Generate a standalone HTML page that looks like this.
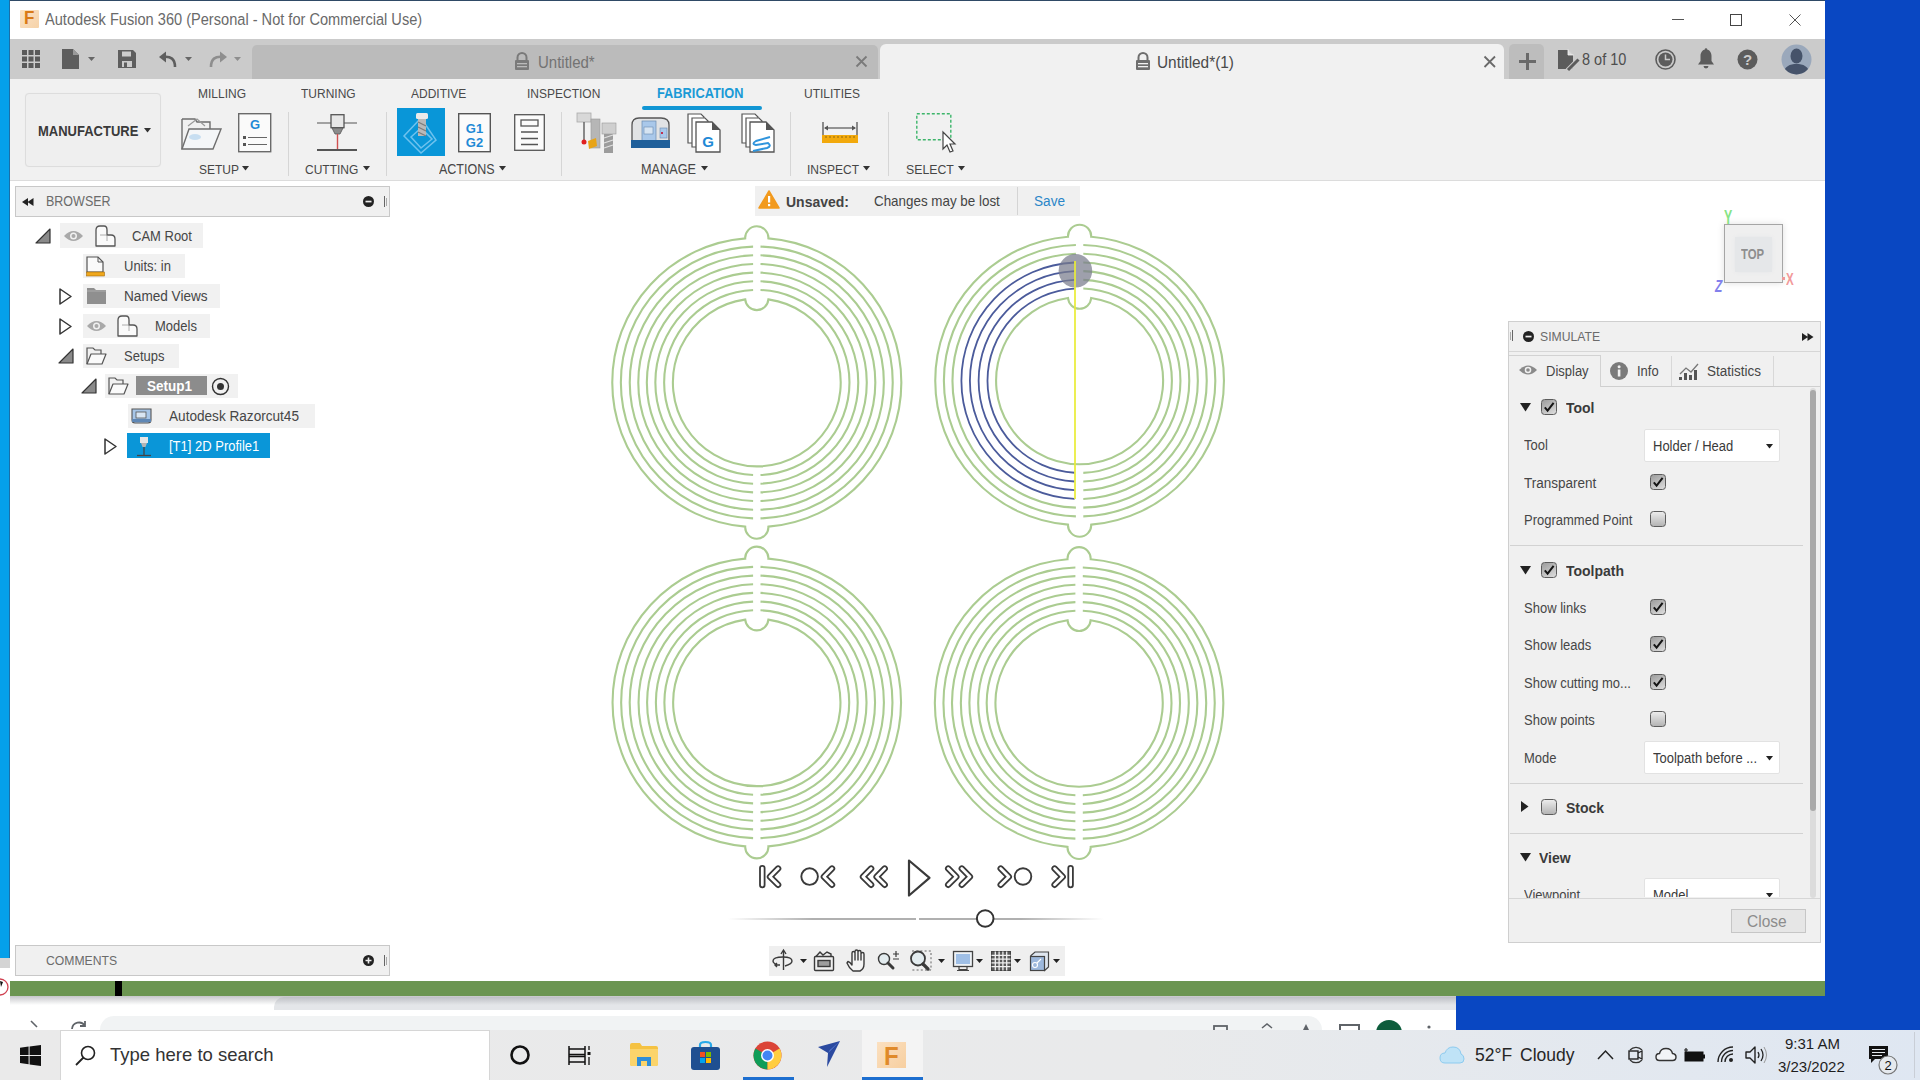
<!DOCTYPE html>
<html><head><meta charset="utf-8">
<style>
*{margin:0;padding:0;box-sizing:border-box}
html,body{width:1920px;height:1080px;overflow:hidden;background:#0947c2;font-family:"Liberation Sans",sans-serif;color:#3c3c3c}
.a{position:absolute}
.t{position:absolute;white-space:nowrap;line-height:1;transform:scaleY(1.1);transform-origin:0 0}
.tb{transform:none}
svg{position:absolute;overflow:visible}
</style></head><body>
<!-- desktop / background -->
<div class="a" style="left:0;top:0;width:10px;height:958px;background:#05a0ea"></div><div class="a" style="left:9px;top:0;width:1px;height:958px;background:#1a6fa8"></div>
<!-- behind browser window -->
<div class="a" style="left:0;top:958px;width:10px;height:10px;background:#d4d4d4"></div>
<div class="a" style="left:0;top:996px;width:1456px;height:34px;background:#fff"></div>
<div class="a" style="left:274px;top:997px;width:1182px;height:13px;background:#e4e6e9;border-radius:10px 0 0 0"></div>
<div class="a" style="left:10px;top:996px;width:1446px;height:9px;background:linear-gradient(rgba(150,152,158,0.55),rgba(200,202,206,0))"></div>
<div class="a" style="left:100px;top:1016px;width:1222px;height:14px;background:#f1f3f4;border-radius:14px 14px 0 0"></div>
<svg style="left:28px;top:1020px" width="60" height="10"><path d="M3 1L9 7" stroke="#5f6368" stroke-width="1.6"/><path d="M44 9A7 7 0 0 1 57 6M57 1V6H52" fill="none" stroke="#5f6368" stroke-width="1.8"/></svg>
<div class="a" style="left:0;top:968px;width:10px;height:28px;background:#fff"></div>
<svg style="left:0;top:978px" width="10" height="20"><circle cx="0" cy="9" r="8" fill="none" stroke="#d04050" stroke-width="1.3"/><path d="M0 3L3 4L1 9" fill="#111"/></svg>
<svg style="left:1205px;top:1018px" width="240" height="12"><rect x="9" y="8" width="13" height="6" fill="none" stroke="#5f6368" stroke-width="1.8"/><path d="M57 10L62 6L67 10" fill="none" stroke="#5f6368" stroke-width="1.6"/><path d="M98 12L101 6L104 12" fill="#5f6368"/><rect x="135" y="7" width="19" height="8" fill="none" stroke="#5f6368" stroke-width="2"/><circle cx="184" cy="15" r="13" fill="#0d5c3c"/><circle cx="224" cy="9" r="1.6" fill="#5f6368"/></svg>
<!-- main window -->
<div class="a" style="left:10px;top:0;width:1815px;height:996px;background:#fff;border-top:1px solid #2f4a66"></div>
<!-- title bar -->
<!-- tab bar -->
<div class="a" style="left:10px;top:39px;width:1815px;height:40px;background:#cbcbcb"></div>
<div class="a" style="left:252px;top:45px;width:626px;height:34px;background:#bbbbbb;border-radius:5px 5px 0 0"></div>
<div class="a" style="left:880px;top:44px;width:624px;height:35px;background:#f1f1f1;border-radius:6px 6px 0 0"></div>
<div class="a" style="left:1509px;top:44px;width:35px;height:35px;background:#bdbdbd;border-radius:5px 5px 0 0"></div>
<!-- toolbar -->
<div class="a" style="left:10px;top:79px;width:1815px;height:102px;background:#f1f1f1;border-bottom:1px solid #dcdcdc"></div>
<!-- green status bar -->
<div class="a" style="left:10px;top:981px;width:1815px;height:15px;background:#6b9551"></div>
<div class="a" style="left:115px;top:981px;width:7px;height:15px;background:#000"></div>
<!-- title contents -->
<div class="a" style="left:20px;top:10px;width:19px;height:18px;background:linear-gradient(135deg,#fbe3c6,#f6d2a8);border-radius:1px"></div>
<div class="t" style="left:24px;top:9px;font-size:17px;font-weight:700;color:#d97a17">F</div>
<div class="t" style="left:45px;top:12px;font-size:14.6px;color:#6a6a6a">Autodesk Fusion 360 (Personal - Not for Commercial Use)</div>
<div class="a" style="left:1672px;top:19px;width:12px;height:1px;background:#555"></div>
<div class="a" style="left:1730px;top:14px;width:12px;height:12px;border:1px solid #444"></div>
<svg style="left:1789px;top:14px" width="12" height="12"><path d="M0.5 0.5L11.5 11.5M11.5 0.5L0.5 11.5" stroke="#555" stroke-width="1"/></svg>
<!-- tab bar icons -->
<svg style="left:22px;top:50px" width="18" height="18"><g fill="#5a5a5a"><rect x="0" y="0" width="5" height="5"/><rect x="6.5" y="0" width="5" height="5"/><rect x="13" y="0" width="5" height="5"/><rect x="0" y="6.5" width="5" height="5"/><rect x="6.5" y="6.5" width="5" height="5"/><rect x="13" y="6.5" width="5" height="5"/><rect x="0" y="13" width="5" height="5"/><rect x="6.5" y="13" width="5" height="5"/><rect x="13" y="13" width="5" height="5"/></g></svg>
<svg style="left:62px;top:49px" width="36" height="20"><path d="M0 0H11L17 6V20H0Z" fill="#5e5e5e"/><path d="M11 0V6H17" fill="#9a9a9a"/><path d="M26 8H33L29.5 12Z" fill="#666"/></svg>
<svg style="left:118px;top:50px" width="18" height="18"><path d="M0 0H15L18 3V18H0Z" fill="#5e5e5e"/><rect x="4" y="1.5" width="9" height="5" fill="#cbcbcb"/><rect x="4" y="11" width="10" height="6" fill="#cbcbcb"/><rect x="6" y="12.5" width="3" height="4.5" fill="#5e5e5e"/></svg>
<svg style="left:159px;top:51px" width="36" height="18"><path d="M16 16C16 8 12 5 4 6" fill="none" stroke="#5e5e5e" stroke-width="2.6"/><path d="M0 6L7 0.5V11.5Z" fill="#5e5e5e"/><path d="M26 6H33L29.5 10Z" fill="#666"/></svg>
<svg style="left:209px;top:51px" width="36" height="18"><path d="M2 16C2 8 6 5 14 6" fill="none" stroke="#8e8e8e" stroke-width="2.6"/><path d="M18 6L11 0.5V11.5Z" fill="#8e8e8e"/><path d="M25 6H32L28.5 10Z" fill="#8e8e8e"/></svg>
<!-- inactive tab -->
<svg style="left:514px;top:52px" width="16" height="18"><path d="M3.5 8V5.5A4.5 4.5 0 0 1 12.5 5.5V8" fill="none" stroke="#7a7a7a" stroke-width="2"/><rect x="1" y="8" width="14" height="10" rx="1" fill="#7a7a7a"/><rect x="3" y="11" width="10" height="1.3" fill="#bbb"/><rect x="3" y="14" width="10" height="1.3" fill="#bbb"/></svg>
<div class="t" style="left:538px;top:54px;font-size:15px;color:#737373">Untitled*</div>
<svg style="left:856px;top:56px" width="11" height="11"><path d="M0.5 0.5L10.5 10.5M10.5 0.5L0.5 10.5" stroke="#7a7a7a" stroke-width="1.8"/></svg>
<!-- active tab -->
<svg style="left:1135px;top:52px" width="16" height="18"><path d="M3.5 8V5.5A4.5 4.5 0 0 1 12.5 5.5V8" fill="none" stroke="#6e6e6e" stroke-width="2"/><rect x="1" y="8" width="14" height="10" rx="1" fill="#6e6e6e"/><rect x="3" y="11" width="10" height="1.3" fill="#f1f1f1"/><rect x="3" y="14" width="10" height="1.3" fill="#f1f1f1"/></svg>
<div class="t" style="left:1157px;top:54px;font-size:15.4px;color:#4a4a4a">Untitled*(1)</div>
<svg style="left:1484px;top:56px" width="12" height="12"><path d="M0.5 0.5L11 11M11 0.5L0.5 11" stroke="#6a6a6a" stroke-width="1.8"/></svg>
<svg style="left:1519px;top:53px" width="17" height="17"><path d="M8.5 0V17M0 8.5H17" stroke="#6a6a6a" stroke-width="3"/></svg>
<svg style="left:1558px;top:49px" width="22" height="21"><path d="M0 1H10L15 6V20H0Z" fill="#5c5c5c"/><path d="M10 0.5V6H15.5" fill="#dcdcdc" stroke="#f6f6f6" stroke-width="0.8"/><path d="M20 11L9.5 21.5" stroke="#cbcbcb" stroke-width="5"/><path d="M20.5 10.5L10 21" stroke="#5c5c5c" stroke-width="3"/></svg>
<div class="t" style="left:1582px;top:52px;font-size:14.5px;color:#4e4e4e">8 of 10</div>
<svg style="left:1655px;top:49px" width="21" height="21"><circle cx="10.5" cy="10.5" r="9.5" fill="none" stroke="#5c5c5c" stroke-width="1.6"/><circle cx="10.5" cy="10.5" r="7" fill="#5c5c5c"/><path d="M10.5 5.5V10.5H15" fill="none" stroke="#cbcbcb" stroke-width="1.5"/></svg>
<svg style="left:1697px;top:48px" width="18" height="22"><path d="M9 1.5C5 1.5 3.5 5 3.5 8V13L1 16.5H17L14.5 13V8C14.5 5 13 1.5 9 1.5Z" fill="#5c5c5c"/><circle cx="9" cy="1.5" r="1.3" fill="#5c5c5c"/><path d="M6.5 18A2.5 2.5 0 0 0 11.5 18Z" fill="#5c5c5c"/></svg>
<svg style="left:1737px;top:49px" width="21" height="21"><circle cx="10.5" cy="10.5" r="10" fill="#5c5c5c"/><text x="10.5" y="16" text-anchor="middle" font-family="Liberation Sans" font-weight="700" font-size="15" fill="#cbcbcb">?</text></svg>
<svg style="left:1781px;top:44px" width="31" height="31"><defs><clipPath id="av"><circle cx="15.5" cy="15.5" r="15"/></clipPath></defs><circle cx="15.5" cy="15.5" r="15" fill="#9aa8bb"/><g clip-path="url(#av)" fill="#46536a"><ellipse cx="15.5" cy="12" rx="6" ry="7.5"/><path d="M2 31C3 22 9 20 15.5 20S28 22 29 31Z"/></g></svg>

<!-- toolbar contents -->
<div class="a" style="left:25px;top:93px;width:136px;height:74px;background:#efefef;border:1px solid #dddddd;border-radius:4px;box-shadow:0 0 1px #e6e6e6"></div>
<div class="t" style="left:38px;top:124px;font-size:13px;font-weight:700;color:#3a3a3a">MANUFACTURE</div>
<svg style="left:144px;top:128px" width="7" height="5"><path d="M0 0H7L3.5 4.5Z" fill="#333"/></svg>
<div class="t" style="left:198px;top:87px;font-size:12px;color:#4a4a4a">MILLING</div>
<div class="t" style="left:301px;top:87px;font-size:12px;color:#4a4a4a">TURNING</div>
<div class="t" style="left:411px;top:87px;font-size:12px;color:#4a4a4a">ADDITIVE</div>
<div class="t" style="left:527px;top:87px;font-size:12px;color:#4a4a4a">INSPECTION</div>
<div class="t" style="left:657px;top:87px;font-size:12.8px;font-weight:700;color:#1a9ad6">FABRICATION</div>
<div class="a" style="left:642px;top:106px;width:120px;height:3.5px;background:#1196d4;border-radius:2px"></div>
<div class="t" style="left:804px;top:87px;font-size:12px;color:#4a4a4a">UTILITIES</div>
<div class="t" style="left:199px;top:163px;font-size:12px;color:#464646">SETUP</div>
<svg style="left:242px;top:166px" width="7" height="5"><path d="M0 0H7L3.5 4.5Z" fill="#333"/></svg>
<div class="t" style="left:305px;top:163px;font-size:12px;color:#464646">CUTTING</div>
<svg style="left:363px;top:166px" width="7" height="5"><path d="M0 0H7L3.5 4.5Z" fill="#333"/></svg>
<div class="t" style="left:439px;top:163px;font-size:12.5px;color:#464646">ACTIONS</div>
<svg style="left:499px;top:166px" width="7" height="5"><path d="M0 0H7L3.5 4.5Z" fill="#333"/></svg>
<div class="t" style="left:641px;top:163px;font-size:12.7px;color:#464646">MANAGE</div>
<svg style="left:701px;top:166px" width="7" height="5"><path d="M0 0H7L3.5 4.5Z" fill="#333"/></svg>
<div class="t" style="left:807px;top:163px;font-size:12px;color:#464646">INSPECT</div>
<svg style="left:863px;top:166px" width="7" height="5"><path d="M0 0H7L3.5 4.5Z" fill="#333"/></svg>
<div class="t" style="left:906px;top:163px;font-size:12.3px;color:#464646">SELECT</div>
<svg style="left:958px;top:166px" width="7" height="5"><path d="M0 0H7L3.5 4.5Z" fill="#333"/></svg>
<div class="a" style="left:288px;top:112px;width:1px;height:64px;background:#d6d6d6"></div>
<div class="a" style="left:386px;top:112px;width:1px;height:64px;background:#d6d6d6"></div>
<div class="a" style="left:561px;top:112px;width:1px;height:64px;background:#d6d6d6"></div>
<div class="a" style="left:790px;top:112px;width:1px;height:64px;background:#d6d6d6"></div>
<div class="a" style="left:888px;top:112px;width:1px;height:64px;background:#d6d6d6"></div>
<!-- setup folder -->
<svg style="left:181px;top:116px" width="41" height="34"><path d="M1 3H14L16 6H29V13" fill="none" stroke="#6e6e6e" stroke-width="1.4"/><path d="M1 3V33" stroke="#6e6e6e" stroke-width="1.4"/><path d="M7 10L16 3L24 10" fill="none" stroke="#9a9a9a" stroke-width="1.2"/><path d="M8 13H40L32 33H1Z" fill="#f4f6f8" stroke="#6e6e6e" stroke-width="1.4"/><ellipse cx="14" cy="21" rx="6" ry="3" fill="#bcd8ef" opacity="0.8"/></svg>
<!-- G doc -->
<svg style="left:238px;top:113px" width="34" height="40"><rect x="0.7" y="0.7" width="32" height="38" fill="#fafafa" stroke="#6a6a6a" stroke-width="1.4"/><text x="17" y="16" text-anchor="middle" font-family="Liberation Sans" font-weight="700" font-size="13" fill="#1f8ad6">G</text><rect x="5" y="23" width="3" height="3" fill="#555"/><rect x="5" y="30" width="3" height="3" fill="#555"/><path d="M10 24.5H29M10 31.5H29" stroke="#666" stroke-width="1.2"/></svg>
<!-- turning cutting -->
<svg style="left:317px;top:114px" width="41" height="38"><path d="M0 9H40" stroke="#555" stroke-width="1.2"/><rect x="14" y="0.7" width="13" height="13" fill="#e7e7e7" stroke="#555" stroke-width="1.3"/><path d="M15 14H26L23 20H18Z" fill="#8b8b8b" stroke="#555" stroke-width="0.8"/><path d="M20.5 20V35" stroke="#d05050" stroke-width="1.4"/><path d="M0 36H40" stroke="#555" stroke-width="2.2"/></svg>
<!-- active 2D profile icon -->
<div class="a" style="left:397px;top:108px;width:48px;height:48px;background:#0996d8"></div>
<svg style="left:397px;top:108px" width="48" height="48"><path d="M24 10L39 32L24 45L7 28Z" fill="none" stroke="#6ec2ee" stroke-width="1.5"/><path d="M24 20L35 31L24 40L14 29Z" fill="none" stroke="#6ec2ee" stroke-width="1.5"/><rect x="19" y="5" width="12" height="6" rx="1.5" fill="#eaeaea"/><rect x="21" y="11" width="8" height="17" fill="#b9b9b9"/><path d="M21 14L29 18M21 19L29 23M21 24L29 28" stroke="#7c7c7c" stroke-width="1.3"/></svg>
<!-- G1G2 -->
<svg style="left:458px;top:113px" width="33" height="40"><rect x="0.7" y="0.7" width="31.6" height="38" fill="#fbfbfb" stroke="#555" stroke-width="1.4"/><text x="16.5" y="20" text-anchor="middle" font-family="Liberation Sans" font-weight="700" font-size="13" fill="#1f8ad6">G1</text><text x="16.5" y="34" text-anchor="middle" font-family="Liberation Sans" font-weight="700" font-size="13" fill="#1f8ad6">G2</text></svg>
<!-- doc lines -->
<svg style="left:514px;top:114px" width="31" height="37"><rect x="0.7" y="0.7" width="29.6" height="35.6" fill="#fbfbfb" stroke="#555" stroke-width="1.3"/><rect x="7" y="6" width="17" height="6" fill="none" stroke="#555" stroke-width="1.3"/><path d="M7 18H24M7 24.5H24M7 30.5H24" stroke="#555" stroke-width="1.3"/></svg>
<!-- tools -->
<svg style="left:576px;top:113px" width="41" height="40"><rect x="1" y="0" width="14" height="9" fill="#d8d8d8" stroke="#aaa" stroke-width="0.8"/><path d="M8 9V28" stroke="#666" stroke-width="1.5"/><circle cx="8" cy="29" r="2.5" fill="#e02020"/><rect x="15" y="6" width="9" height="29" fill="#b6b6b6" stroke="#999" stroke-width="0.6"/><path d="M12 28L20 25L21 33L13 36Z" fill="#e8a417"/><rect x="26" y="10" width="14" height="11" fill="#cfcfcf" stroke="#999" stroke-width="0.6"/><rect x="28" y="21" width="9" height="19" fill="#9c9c9c"/><path d="M28 25L37 22M28 30L37 27M28 35L37 32" stroke="#e0e0e0" stroke-width="1.3"/></svg>
<!-- machine -->
<svg style="left:630px;top:117px" width="41" height="33"><path d="M2 26V8Q2 1 9 1H31Q39 1 39 8V26Z" fill="#e1e3e5" stroke="#555" stroke-width="1.3"/><rect x="12" y="4" width="14" height="20" fill="#a9c8ea" stroke="#6a8bb0" stroke-width="0.7"/><rect x="14" y="10" width="9" height="7" fill="#d6e4f2" stroke="#6a8bb0" stroke-width="0.6"/><rect x="30" y="11" width="7" height="10" fill="#a9c8ea" stroke="#6a8bb0" stroke-width="0.6"/><rect x="31" y="15" width="2" height="2" fill="#c03050"/><rect x="1" y="23" width="39" height="8" fill="#1f5f9a"/></svg>
<!-- G docs -->
<svg style="left:687px;top:113px" width="35" height="40"><path d="M1 1H14L17 4V30H1Z" fill="#fff" stroke="#555" stroke-width="1.2"/><path d="M5 5H18L21 8V34H5Z" fill="#fff" stroke="#555" stroke-width="1.2"/><path d="M9 9H25L33 17V39H9Z" fill="#fff" stroke="#555" stroke-width="1.3"/><path d="M25 9V17H33Z" fill="#555"/><text x="21" y="34" text-anchor="middle" font-family="Liberation Sans" font-weight="700" font-size="15" fill="#1f8ad6">G</text></svg>
<!-- S docs -->
<svg style="left:741px;top:113px" width="35" height="40"><path d="M1 1H14L17 4V30H1Z" fill="#fff" stroke="#555" stroke-width="1.2"/><path d="M5 5H18L21 8V34H5Z" fill="#fff" stroke="#555" stroke-width="1.2"/><path d="M9 9H25L33 17V39H9Z" fill="#fff" stroke="#555" stroke-width="1.3"/><path d="M25 9V17H33Z" fill="#555"/><path d="M29 24L15 28Q10 31 15 32L27 30Q31 33 26 35L12 38" fill="none" stroke="#2f94dc" stroke-width="2"/></svg>
<!-- ruler -->
<svg style="left:822px;top:122px" width="37" height="22"><path d="M1 0V14M35 0V14" stroke="#555" stroke-width="1.3"/><path d="M3 6H33" stroke="#555" stroke-width="1.2"/><path d="M2 6L6 3.5V8.5Z M34 6L30 3.5V8.5Z" fill="#555"/><rect x="0" y="13" width="36" height="8" fill="#f2a90c"/><path d="M4 14V16M8 14V16M12 14V16M16 14V16M20 14V16M24 14V16M28 14V16M32 14V16" stroke="#7a5a10" stroke-width="0.8"/></svg>
<!-- select -->
<svg style="left:916px;top:113px" width="42" height="40"><rect x="0.8" y="0.8" width="34" height="26" fill="none" stroke="#3cb56a" stroke-width="1.4" stroke-dasharray="3 2"/><path d="M27 19V36L31 32L34 39L37 38L34 31L39 31Z" fill="#fff" stroke="#444" stroke-width="1.2"/></svg>
<!-- circles -->
<svg style="left:0;top:0" width="1920" height="1080" viewBox="0 0 1920 1080">
<path d="M768.39 238.37 A144.60 144.60 0 0 1 768.39 526.63 A11.6 11.6 0 1 1 745.21 526.63 A144.60 144.60 0 0 1 745.21 238.37 A11.6 11.6 0 1 1 768.39 238.37Z M768.37 299.40 A83.90 83.90 0 1 1 745.23 299.40 A11.6 11.6 0 0 0 768.37 299.40Z M760.50 246.62 A135.93 135.93 0 0 1 760.50 518.38 M753.10 246.62 A135.93 135.93 0 0 0 753.10 518.38 M760.50 255.30 A127.26 127.26 0 0 1 760.50 509.70 M753.10 255.30 A127.26 127.26 0 0 0 753.10 509.70 M760.50 263.97 A118.59 118.59 0 0 1 760.50 501.03 M753.10 263.97 A118.59 118.59 0 0 0 753.10 501.03 M760.50 272.65 A109.91 109.91 0 0 1 760.50 492.35 M753.10 272.65 A109.91 109.91 0 0 0 753.10 492.35 M760.50 281.32 A101.24 101.24 0 0 1 760.50 483.68 M753.10 281.32 A101.24 101.24 0 0 0 753.10 483.68 M760.50 290.00 A92.57 92.57 0 0 1 760.50 475.00 M753.10 290.00 A92.57 92.57 0 0 0 753.10 475.00 M1091.19 236.77 A144.40 144.40 0 0 1 1091.19 524.63 A11.6 11.6 0 1 1 1068.01 524.63 A144.40 144.40 0 0 1 1068.01 236.77 A11.6 11.6 0 1 1 1091.19 236.77Z M1091.17 298.01 A83.50 83.50 0 1 1 1068.03 298.01 A11.6 11.6 0 0 0 1091.17 298.01Z M1083.30 245.05 A135.70 135.70 0 0 1 1083.30 516.35 M1075.90 245.05 A135.70 135.70 0 0 0 1075.90 516.35 M1083.30 253.75 A127.00 127.00 0 0 1 1083.30 507.65 M1075.90 253.75 A127.00 127.00 0 0 0 1075.90 507.65 M1083.30 262.46 A118.30 118.30 0 0 1 1083.30 498.94 M1083.30 271.16 A109.60 109.60 0 0 1 1083.30 490.24 M1083.30 279.87 A100.90 100.90 0 0 1 1083.30 481.53 M1083.30 288.57 A92.20 92.20 0 0 1 1083.30 472.83 M768.39 558.67 A144.30 144.30 0 0 1 768.39 846.33 A11.6 11.6 0 1 1 745.21 846.33 A144.30 144.30 0 0 1 745.21 558.67 A11.6 11.6 0 1 1 768.39 558.67Z M768.37 619.65 A83.65 83.65 0 1 1 745.23 619.65 A11.6 11.6 0 0 0 768.37 619.65Z M760.50 566.91 A135.64 135.64 0 0 1 760.50 838.09 M753.10 566.91 A135.64 135.64 0 0 0 753.10 838.09 M760.50 575.58 A126.97 126.97 0 0 1 760.50 829.42 M753.10 575.58 A126.97 126.97 0 0 0 753.10 829.42 M760.50 584.25 A118.31 118.31 0 0 1 760.50 820.75 M753.10 584.25 A118.31 118.31 0 0 0 753.10 820.75 M760.50 592.92 A109.64 109.64 0 0 1 760.50 812.08 M753.10 592.92 A109.64 109.64 0 0 0 753.10 812.08 M760.50 601.59 A100.98 100.98 0 0 1 760.50 803.41 M753.10 601.59 A100.98 100.98 0 0 0 753.10 803.41 M760.50 610.26 A92.31 92.31 0 0 1 760.50 794.74 M753.10 610.26 A92.31 92.31 0 0 0 753.10 794.74 M1090.69 559.22 A144.30 144.30 0 0 1 1090.69 846.88 A11.6 11.6 0 1 1 1067.51 846.88 A144.30 144.30 0 0 1 1067.51 559.22 A11.6 11.6 0 1 1 1090.69 559.22Z M1090.67 620.20 A83.65 83.65 0 1 1 1067.53 620.20 A11.6 11.6 0 0 0 1090.67 620.20Z M1082.80 567.46 A135.64 135.64 0 0 1 1082.80 838.64 M1075.40 567.46 A135.64 135.64 0 0 0 1075.40 838.64 M1082.80 576.13 A126.97 126.97 0 0 1 1082.80 829.97 M1075.40 576.13 A126.97 126.97 0 0 0 1075.40 829.97 M1082.80 584.80 A118.31 118.31 0 0 1 1082.80 821.30 M1075.40 584.80 A118.31 118.31 0 0 0 1075.40 821.30 M1082.80 593.47 A109.64 109.64 0 0 1 1082.80 812.63 M1075.40 593.47 A109.64 109.64 0 0 0 1075.40 812.63 M1082.80 602.14 A100.98 100.98 0 0 1 1082.80 803.96 M1075.40 602.14 A100.98 100.98 0 0 0 1075.40 803.96 M1082.80 610.81 A92.31 92.31 0 0 1 1082.80 795.29 M1075.40 610.81 A92.31 92.31 0 0 0 1075.40 795.29" fill="none" stroke="#abcc91" stroke-width="2.1"/>
<path d="M1074.60 262.51 A118.30 118.30 0 0 0 1074.60 498.89 M1074.60 271.21 A109.60 109.60 0 0 0 1074.60 490.19 M1074.60 279.92 A100.90 100.90 0 0 0 1074.60 481.48 M1074.60 288.64 A92.20 92.20 0 0 0 1074.60 472.76" fill="none" stroke="#4b5b9b" stroke-width="1.8"/>
<circle cx="1075.4" cy="270.8" r="16.8" fill="rgba(120,124,140,0.72)"/>
<path d="M1075 261V499" stroke="#e9ec36" stroke-width="1.7"/>
</svg>
<!-- /circles -->
<!-- view cube -->
<div class="a" style="left:1724px;top:224px;width:59px;height:59px;background:#efefef;border:1.5px solid #a5a5a5;box-shadow:0 0 7px rgba(0,0,0,0.13)"></div>
<div class="a" style="left:1735px;top:237px;width:37px;height:35px;background:#e5e7e9;box-shadow:0 0 4px #e5e7e9"></div>
<div class="t" style="left:1741px;top:247px;font-size:14.5px;font-weight:700;color:#8e8e8e;transform:scaleX(0.78);transform-origin:left">TOP</div>
<div class="t" style="left:1724px;top:207px;font-size:20px;font-weight:700;color:#86e486;transform:scaleX(0.62);transform-origin:left">Y</div>
<div class="t" style="left:1786px;top:271px;font-size:16.5px;font-weight:700;color:#f29a9a;transform:scaleX(0.7);transform-origin:left">X</div>
<div class="a" style="left:1782px;top:277px;width:3px;height:3px;background:#e99"></div>
<div class="t" style="left:1715px;top:279px;font-size:16px;font-weight:700;font-style:italic;color:#8280ec;transform:scaleX(0.75);transform-origin:left">Z</div>
<!-- playback -->
<svg style="left:740px;top:850px" width="350" height="55" fill="none" stroke-linecap="round" stroke-linejoin="round">
<path d="M22.30 18.10V35.00 M38.10 18.60L30.00 26.70L38.10 34.80 M92.00 18.60L83.90 26.70L92.00 34.80 M131.10 18.60L123.00 26.70L131.10 34.80 M144.70 18.60L136.60 26.70L144.70 34.80 M208.20 18.60L216.30 26.70L208.20 34.80 M221.80 18.60L229.90 26.70L221.80 34.80 M260.70 18.60L268.80 26.70L260.70 34.80 M314.60 18.60L322.70 26.70L314.60 34.80 M330.60 18.10V35.00" stroke="#3a3a3a" stroke-width="6.4"/>
<path d="M22.30 18.10V35.00 M38.10 18.60L30.00 26.70L38.10 34.80 M92.00 18.60L83.90 26.70L92.00 34.80 M131.10 18.60L123.00 26.70L131.10 34.80 M144.70 18.60L136.60 26.70L144.70 34.80 M208.20 18.60L216.30 26.70L208.20 34.80 M221.80 18.60L229.90 26.70L221.80 34.80 M260.70 18.60L268.80 26.70L260.70 34.80 M314.60 18.60L322.70 26.70L314.60 34.80 M330.60 18.10V35.00" stroke="#fff" stroke-width="2.8"/>
<circle cx="69.60" cy="26.60" r="8.3" stroke="#3a3a3a" stroke-width="1.9"/>
<circle cx="283.00" cy="26.50" r="8.3" stroke="#3a3a3a" stroke-width="1.9"/>
<path d="M169.00 10.50L189.50 27.80L169.00 45.50Z" stroke="#3a3a3a" stroke-width="2.2"/>
</svg>
<!-- slider -->
<div class="a" style="left:728px;top:918px;width:188px;height:1.6px;background:linear-gradient(90deg,rgba(176,176,176,0),#b0b0b0 45%)"></div>
<div class="a" style="left:919px;top:918px;width:185px;height:1.6px;background:linear-gradient(90deg,#b0b0b0 55%,rgba(176,176,176,0))"></div>
<svg style="left:975px;top:908px" width="21" height="21"><circle cx="10.2" cy="10.5" r="8.3" fill="#fff" stroke="#333" stroke-width="2"/></svg>
<!-- nav toolbar -->
<div class="a" style="left:769px;top:946px;width:296px;height:30px;background:#efefef"></div>
<svg style="left:765px;top:940px" width="310" height="40">
<g fill="none" stroke="#3a3a3a" stroke-width="1.4">
<path d="M18.5 30V11"/><path d="M16 14L18.5 10L21 14"/>
<path d="M20 26Q27 24 27 21Q27 17 18 17Q8 17 8 21Q8 23 12 25"/><path d="M15 25H10M12 23L10 25L12 27"/>
<rect x="49.5" y="16.5" width="19" height="14" rx="1"/><rect x="53" y="20.5" width="12" height="6" fill="#9d9d9d"/><path d="M51 16.5L55 12L58 15L62 12L66 14V16.5"/>
<path d="M88 31Q84 28 82 23L83 21.5Q85 22 87 25V13Q87 11.5 88.5 11.5Q90 11.5 90 13V20V11.5Q90 10 91.5 10Q93 10 93 11.5V20V12Q93 10.5 94.5 10.5Q96 10.5 96 12V20V14Q96 12.5 97.5 12.5Q99 12.5 99 14V24Q99 29 95 31Z" fill="#f4f4f4" stroke-linejoin="round"/>
<circle cx="119" cy="19" r="5.5" fill="#e3ecef"/><path d="M123 23L128 28" stroke-width="3" stroke-linecap="round"/><path d="M131 11V17M128 14H134M128 19H134" stroke-width="1.2"/>
<circle cx="153" cy="18.5" r="7" fill="#e3ecef" stroke-width="1.8"/><path d="M158 24L163 29" stroke-width="3.2" stroke-linecap="round"/><path d="M147 11H166V30H147" stroke="#555" stroke-width="0.9" stroke-dasharray="2 2.2"/>
</g>
<g fill="#222"><path d="M35 19H42L38.5 23Z"/><path d="M173 19H180L176.5 23Z"/><path d="M211 19H218L214.5 23Z"/><path d="M249 19H256L252.5 23Z"/><path d="M288 19H295L291.5 23Z"/></g>
<rect x="188.5" y="11.5" width="19" height="15" fill="#eef2f6" stroke="#444" stroke-width="1.3"/><rect x="191" y="14" width="14" height="10" fill="#9fbfe6"/><path d="M194 26.5V29.5H202V26.5M192 30.5H204" stroke="#444" stroke-width="1.2" fill="none"/>
<rect x="226.5" y="11.5" width="19" height="19" fill="#5a5a5a" stroke="#444" stroke-width="1"/>
<path d="M230.3 11.5V30.5M234.1 11.5V30.5M237.9 11.5V30.5M241.7 11.5V30.5M226.5 15.3H245.5M226.5 19.1H245.5M226.5 22.9H245.5M226.5 26.7H245.5" stroke="#f0f0f0" stroke-width="1.3"/>
<path d="M265.5 16L270 12H283.5V27L279 31" fill="#dfe6ef" stroke="#444" stroke-width="1.2"/><rect x="265.5" y="16.5" width="14" height="14" fill="#9db8dc" stroke="#444" stroke-width="1.2"/><circle cx="270" cy="25" r="2.5" fill="none" stroke="#fff" stroke-width="1.1"/><path d="M272 23L276 19" stroke="#fff" stroke-width="1.1"/>
</svg>
<!-- browser panel -->
<div class="a" style="left:15px;top:186px;width:375px;height:31px;background:#f0f0f0;border:1px solid #c8c8c8"></div>
<svg style="left:22px;top:198px" width="12" height="8"><path d="M0 4L6 0V8Z M5.5 4L11.5 0V8Z" fill="#222"/></svg>
<div class="t" style="left:46px;top:195px;font-size:12.5px;color:#6b6b6b">BROWSER</div>
<svg style="left:363px;top:196px" width="11" height="11"><circle cx="5.5" cy="5.5" r="5.5" fill="#222"/><rect x="2.5" y="4.7" width="6" height="1.7" fill="#eee"/></svg>
<div class="a" style="left:384px;top:196px;width:1px;height:11px;background:#666"></div>
<div class="a" style="left:386px;top:198px;width:1px;height:8px;background:#aaa"></div>
<!-- tree rows -->
<div class="a" style="left:60px;top:223px;width:143px;height:25px;background:#f1f1f1"></div>
<div class="a" style="left:83px;top:254px;width:102px;height:24px;background:#f1f1f1"></div>
<div class="a" style="left:83px;top:284px;width:137px;height:24px;background:#f1f1f1"></div>
<div class="a" style="left:83px;top:314px;width:127px;height:24px;background:#f1f1f1"></div>
<div class="a" style="left:83px;top:344px;width:96px;height:24px;background:#f1f1f1"></div>
<div class="a" style="left:105px;top:374px;width:133px;height:24px;background:#f1f1f1"></div>
<div class="a" style="left:128px;top:404px;width:187px;height:24px;background:#f1f1f1"></div>
<div class="a" style="left:127px;top:433px;width:143px;height:25px;background:#0a96d8"></div>
<!-- expanders -->
<svg style="left:35px;top:228px" width="16" height="16"><path d="M1 15H15V1Z" fill="#8a8a8a" stroke="#333" stroke-width="1.2" stroke-linejoin="round"/></svg>
<svg style="left:59px;top:288px" width="13" height="17"><path d="M1 1L12 8.5L1 16Z" fill="#fff" stroke="#333" stroke-width="1.5" stroke-linejoin="round"/></svg>
<svg style="left:59px;top:318px" width="13" height="17"><path d="M1 1L12 8.5L1 16Z" fill="#fff" stroke="#333" stroke-width="1.5" stroke-linejoin="round"/></svg>
<svg style="left:58px;top:348px" width="16" height="16"><path d="M1 15H15V1Z" fill="#8a8a8a" stroke="#333" stroke-width="1.2" stroke-linejoin="round"/></svg>
<svg style="left:81px;top:378px" width="16" height="16"><path d="M1 15H15V1Z" fill="#8a8a8a" stroke="#333" stroke-width="1.2" stroke-linejoin="round"/></svg>
<svg style="left:104px;top:438px" width="13" height="17"><path d="M1 1L12 8.5L1 16Z" fill="#fff" stroke="#333" stroke-width="1.5" stroke-linejoin="round"/></svg>
<!-- icons -->
<svg style="left:63px;top:229px" width="21" height="14"><path d="M1 7Q10.5 -3 20 7Q10.5 17 1 7Z" fill="#a9a9a9"/><circle cx="10.5" cy="7" r="3.5" fill="#f1f1f1"/><circle cx="10.5" cy="7" r="2" fill="#a9a9a9"/></svg>
<svg style="left:95px;top:225px" width="21" height="22"><path d="M1 5Q1 1 5 1H9Q12 1 12 5V10H16Q20 10 20 14V21H1Z" fill="#fafafa" stroke="#555" stroke-width="1.3" stroke-linejoin="round"/><path d="M5 10H12V16" fill="none" stroke="#999" stroke-width="0.8"/></svg>
<div class="t" style="left:132px;top:229px;font-size:13px;color:#464646">CAM Root</div>
<svg style="left:86px;top:256px" width="20" height="21"><path d="M1 1H12L17 6V16H1Z" fill="#fafafa" stroke="#555" stroke-width="1.2"/><path d="M12 1V6H17" fill="none" stroke="#555" stroke-width="1"/><rect x="0.5" y="16" width="18" height="4" fill="#f0a81c" stroke="#a06a10" stroke-width="0.6"/></svg>
<div class="t" style="left:124px;top:259px;font-size:13px;color:#464646">Units: in</div>
<svg style="left:86px;top:287px" width="21" height="18"><path d="M1 1H8L10 3H20V17H1Z" fill="#8f8f8f"/><path d="M1 4H20" stroke="#b5b5b5" stroke-width="0.8"/></svg>
<div class="t" style="left:124px;top:289px;font-size:13.6px;color:#464646">Named Views</div>
<svg style="left:86px;top:319px" width="21" height="14"><path d="M1 7Q10.5 -3 20 7Q10.5 17 1 7Z" fill="#a9a9a9"/><circle cx="10.5" cy="7" r="3.5" fill="#f1f1f1"/><circle cx="10.5" cy="7" r="2" fill="#a9a9a9"/></svg>
<svg style="left:117px;top:315px" width="21" height="22"><path d="M1 5Q1 1 5 1H9Q12 1 12 5V10H16Q20 10 20 14V21H1Z" fill="#fafafa" stroke="#555" stroke-width="1.3" stroke-linejoin="round"/><path d="M5 10H12V16" fill="none" stroke="#999" stroke-width="0.8"/></svg>
<div class="t" style="left:155px;top:319px;font-size:13px;color:#464646">Models</div>
<svg style="left:86px;top:347px" width="21" height="18"><path d="M1 17V1H7L9 3H15V7" fill="none" stroke="#555" stroke-width="1.2"/><path d="M1 17L5 7H20L16 17Z" fill="#fafafa" stroke="#555" stroke-width="1.2" stroke-linejoin="round"/></svg>
<div class="t" style="left:124px;top:349px;font-size:13px;color:#464646">Setups</div>
<svg style="left:108px;top:377px" width="21" height="18"><path d="M1 17V1H7L9 3H15V7" fill="none" stroke="#555" stroke-width="1.2"/><path d="M1 17L5 7H20L16 17Z" fill="#fafafa" stroke="#555" stroke-width="1.2" stroke-linejoin="round"/></svg>
<div class="a" style="left:136px;top:376px;width:71px;height:19px;background:#8c8c8c"></div>
<div class="t" style="left:147px;top:379px;font-size:13.5px;font-weight:700;color:#fff">Setup1</div>
<svg style="left:211px;top:377px" width="19" height="19"><circle cx="9.5" cy="9.5" r="8" fill="none" stroke="#333" stroke-width="1.4"/><circle cx="9.5" cy="9.5" r="3.5" fill="#333"/></svg>
<svg style="left:131px;top:408px" width="21" height="16"><path d="M1 1H20V12Q20 15 17 15H4Q1 15 1 12Z" fill="#a7c6e8" stroke="#555" stroke-width="1.1"/><rect x="5" y="4" width="10" height="6" fill="#d9e6f3" stroke="#555" stroke-width="0.8"/><rect x="1" y="11" width="19" height="3" fill="#5f87b5"/></svg>
<div class="t" style="left:169px;top:409px;font-size:13.6px;color:#464646">Autodesk Razorcut45</div>
<svg style="left:136px;top:437px" width="16" height="20"><rect x="4" y="0" width="8" height="6" fill="#e6e6e6"/><path d="M5 6H11L9.5 10H6.5Z" fill="#b5b5b5"/><path d="M8 10V18" stroke="#444" stroke-width="1.3"/><path d="M1 18.5H15" stroke="#444" stroke-width="1.3"/></svg>
<div class="t" style="left:169px;top:439px;font-size:13px;color:#fff">[T1] 2D Profile1</div>
<!-- comments -->
<div class="a" style="left:15px;top:945px;width:375px;height:31px;background:#f0f0f0;border:1px solid #c8c8c8"></div>
<div class="t" style="left:46px;top:954px;font-size:12.2px;color:#6b6b6b">COMMENTS</div>
<svg style="left:363px;top:955px" width="11" height="11"><circle cx="5.5" cy="5.5" r="5.5" fill="#222"/><path d="M2.5 5.5H8.5M5.5 2.5V8.5" stroke="#eee" stroke-width="1.6"/></svg>
<div class="a" style="left:384px;top:955px;width:1px;height:11px;background:#666"></div>
<div class="a" style="left:386px;top:957px;width:1px;height:8px;background:#aaa"></div>
<!-- unsaved banner -->
<div class="a" style="left:755px;top:186px;width:325px;height:30px;background:#f0f0f0"></div>
<div class="a" style="left:1017px;top:187px;width:1px;height:28px;background:#d4d4d4"></div>
<svg style="left:758px;top:190px" width="22" height="19"><path d="M11 1L21 18H1Z" fill="#f29a1e" stroke="#f29a1e" stroke-width="1.5" stroke-linejoin="round"/><rect x="10" y="6" width="2.2" height="6.5" fill="#fff"/><rect x="10" y="14" width="2.2" height="2.2" fill="#fff"/></svg>
<div class="t" style="left:786px;top:194px;font-size:14px;font-weight:700;color:#444">Unsaved:</div>
<div class="t" style="left:874px;top:194px;font-size:13.4px;color:#444">Changes may be lost</div>
<div class="t" style="left:1034px;top:194px;font-size:13.6px;color:#2a86c8">Save</div>
<!-- simulate panel -->
<div class="a" style="left:1508px;top:321px;width:313px;height:622px;background:#f0f0f0;border:1px solid #cfcfcf"></div>
<div class="a" style="left:1509px;top:351px;width:311px;height:1px;background:#d6d6d6"></div>
<div class="a" style="left:1510px;top:332px;width:1px;height:8px;background:#aaa"></div><div class="a" style="left:1512px;top:330px;width:1px;height:11px;background:#666"></div>
<svg style="left:1523px;top:331px" width="11" height="11"><circle cx="5.5" cy="5.5" r="5.5" fill="#222"/><rect x="2.5" y="4.7" width="6" height="1.7" fill="#eee"/></svg>
<div class="t" style="left:1540px;top:330px;font-size:12.2px;color:#6b6b6b">SIMULATE</div>
<svg style="left:1802px;top:333px" width="12" height="8"><path d="M0 0L6 4L0 8Z M5.5 0L11.5 4L5.5 8Z" fill="#222"/></svg>
<!-- tabs -->
<div class="a" style="left:1509px;top:386px;width:311px;height:1px;background:#cfcfcf"></div>
<div class="a" style="left:1509px;top:355px;width:92px;height:32px;background:#f0f0f0;border:1px solid #d2d2d2;border-bottom:none;border-left:none"></div>
<div class="a" style="left:1671px;top:356px;width:1px;height:30px;background:#d8d8d8"></div>
<div class="a" style="left:1773px;top:356px;width:1px;height:30px;background:#d8d8d8"></div>
<svg style="left:1518px;top:363px" width="20" height="14"><path d="M1 7Q10 -2 19 7Q10 16 1 7Z" fill="#8a8a8a"/><circle cx="10" cy="7" r="3.3" fill="#f0f0f0"/><circle cx="10" cy="7" r="1.8" fill="#8a8a8a"/></svg>
<div class="t" style="left:1546px;top:364px;font-size:13px;color:#464646">Display</div>
<svg style="left:1610px;top:362px" width="18" height="18"><circle cx="9" cy="9" r="9" fill="#7a7a7a"/><rect x="7.8" y="7.5" width="2.6" height="7" fill="#f0f0f0"/><circle cx="9.1" cy="4.8" r="1.5" fill="#f0f0f0"/></svg>
<div class="t" style="left:1637px;top:364px;font-size:13px;color:#464646">Info</div>
<svg style="left:1679px;top:361px" width="20" height="20"><path d="M1 13L7 7L12 11L19 3" fill="none" stroke="#777" stroke-width="1.3"/><rect x="0" y="16" width="3" height="3" fill="#555"/><rect x="5" y="12" width="3" height="7" fill="#555"/><rect x="10" y="14" width="3" height="5" fill="#555"/><rect x="15" y="9" width="3" height="10" fill="#555"/></svg>
<div class="t" style="left:1707px;top:364px;font-size:13.5px;color:#464646">Statistics</div>
<!-- scrollbar -->
<div class="a" style="left:1810px;top:388px;width:6px;height:510px;background:#dcdcdc;border-radius:3px"></div>
<div class="a" style="left:1810px;top:390px;width:6px;height:421px;background:#a9a9a9;border-radius:3px"></div>
<!-- content -->
<svg style="left:1520px;top:403px" width="12" height="9"><path d="M0 0H11L5.5 8.5Z" fill="#222"/></svg>
<div class="a" style="left:1541px;top:399px;width:16px;height:16px;border:1.6px solid #5c5c5c;border-radius:3.5px;background:linear-gradient(150deg,#9c9c9c,#dedede)"></div><svg style="left:1541px;top:399px" width="16" height="16"><path d="M3.8 8.3L6.6 11.6L12.6 3.8" fill="none" stroke="#151515" stroke-width="2"/></svg>
<div class="t" style="left:1566px;top:400px;font-size:14px;font-weight:700;color:#3a3a3a">Tool</div>
<div class="t" style="left:1524px;top:438px;font-size:13px;color:#464646">Tool</div>
<div class="a" style="left:1644px;top:429px;width:136px;height:33px;background:#fff;border:1px solid #e2e2e2;border-radius:2px"></div><div class="t" style="left:1653px;top:439px;font-size:13px;color:#3a3a3a">Holder / Head</div><svg style="left:1766px;top:444px" width="7" height="5"><path d="M0 0H7L3.5 4.5Z" fill="#222"/></svg>
<div class="t" style="left:1524px;top:476px;font-size:13.5px;color:#464646">Transparent</div>
<div class="a" style="left:1650px;top:474px;width:16px;height:16px;border:1.6px solid #5c5c5c;border-radius:3.5px;background:linear-gradient(150deg,#9c9c9c,#dedede)"></div><svg style="left:1650px;top:474px" width="16" height="16"><path d="M3.8 8.3L6.6 11.6L12.6 3.8" fill="none" stroke="#151515" stroke-width="2"/></svg>
<div class="t" style="left:1524px;top:513px;font-size:13px;color:#464646">Programmed Point</div>
<div class="a" style="left:1650px;top:511px;width:16px;height:16px;border:1.6px solid #5c5c5c;border-radius:3.5px;background:linear-gradient(#ececec,#b4b4b4)"></div>
<div class="a" style="left:1510px;top:545px;width:293px;height:1px;background:#d2d2d2"></div>
<svg style="left:1520px;top:566px" width="12" height="9"><path d="M0 0H11L5.5 8.5Z" fill="#222"/></svg>
<div class="a" style="left:1541px;top:562px;width:16px;height:16px;border:1.6px solid #5c5c5c;border-radius:3.5px;background:linear-gradient(150deg,#9c9c9c,#dedede)"></div><svg style="left:1541px;top:562px" width="16" height="16"><path d="M3.8 8.3L6.6 11.6L12.6 3.8" fill="none" stroke="#151515" stroke-width="2"/></svg>
<div class="t" style="left:1566px;top:563px;font-size:14px;font-weight:700;color:#3a3a3a">Toolpath</div>
<div class="t" style="left:1524px;top:601px;font-size:13px;color:#464646">Show links</div>
<div class="a" style="left:1650px;top:599px;width:16px;height:16px;border:1.6px solid #5c5c5c;border-radius:3.5px;background:linear-gradient(150deg,#9c9c9c,#dedede)"></div><svg style="left:1650px;top:599px" width="16" height="16"><path d="M3.8 8.3L6.6 11.6L12.6 3.8" fill="none" stroke="#151515" stroke-width="2"/></svg>
<div class="t" style="left:1524px;top:638px;font-size:13px;color:#464646">Show leads</div>
<div class="a" style="left:1650px;top:636px;width:16px;height:16px;border:1.6px solid #5c5c5c;border-radius:3.5px;background:linear-gradient(150deg,#9c9c9c,#dedede)"></div><svg style="left:1650px;top:636px" width="16" height="16"><path d="M3.8 8.3L6.6 11.6L12.6 3.8" fill="none" stroke="#151515" stroke-width="2"/></svg>
<div class="t" style="left:1524px;top:676px;font-size:13px;color:#464646">Show cutting mo...</div>
<div class="a" style="left:1650px;top:674px;width:16px;height:16px;border:1.6px solid #5c5c5c;border-radius:3.5px;background:linear-gradient(150deg,#9c9c9c,#dedede)"></div><svg style="left:1650px;top:674px" width="16" height="16"><path d="M3.8 8.3L6.6 11.6L12.6 3.8" fill="none" stroke="#151515" stroke-width="2"/></svg>
<div class="t" style="left:1524px;top:713px;font-size:13px;color:#464646">Show points</div>
<div class="a" style="left:1650px;top:711px;width:16px;height:16px;border:1.6px solid #5c5c5c;border-radius:3.5px;background:linear-gradient(#ececec,#b4b4b4)"></div>
<div class="t" style="left:1524px;top:751px;font-size:13px;color:#464646">Mode</div>
<div class="a" style="left:1644px;top:741px;width:136px;height:33px;background:#fff;border:1px solid #e2e2e2;border-radius:2px"></div><div class="t" style="left:1653px;top:751px;font-size:13px;color:#3a3a3a">Toolpath before ...</div><svg style="left:1766px;top:756px" width="7" height="5"><path d="M0 0H7L3.5 4.5Z" fill="#222"/></svg>
<div class="a" style="left:1510px;top:783px;width:293px;height:1px;background:#d2d2d2"></div>
<svg style="left:1521px;top:801px" width="8" height="12"><path d="M0 0V11L7.5 5.5Z" fill="#222"/></svg>
<div class="a" style="left:1541px;top:799px;width:16px;height:16px;border:1.6px solid #5c5c5c;border-radius:3.5px;background:linear-gradient(#ececec,#b4b4b4)"></div>
<div class="t" style="left:1566px;top:800px;font-size:14px;font-weight:700;color:#3a3a3a">Stock</div>
<div class="a" style="left:1510px;top:833px;width:293px;height:1px;background:#d2d2d2"></div>
<svg style="left:1520px;top:853px" width="12" height="9"><path d="M0 0H11L5.5 8.5Z" fill="#222"/></svg>
<div class="t" style="left:1539px;top:850px;font-size:14px;font-weight:700;color:#3a3a3a">View</div>
<div class="t" style="left:1524px;top:888px;font-size:13px;color:#464646">Viewpoint</div>
<div class="a" style="left:0;top:0;width:1920px;height:897px;overflow:hidden"><div class="a" style="left:1644px;top:878px;width:136px;height:33px;background:#fff;border:1px solid #e2e2e2;border-radius:2px"></div><div class="t" style="left:1653px;top:888px;font-size:13px;color:#3a3a3a">Model</div><svg style="left:1766px;top:893px" width="7" height="5"><path d="M0 0H7L3.5 4.5Z" fill="#222"/></svg></div>
<!-- footer -->
<div class="a" style="left:1509px;top:898px;width:311px;height:44px;background:#f0f0f0;border-top:1px solid #d6d6d6"></div>
<div class="a" style="left:1731px;top:909px;width:75px;height:24px;background:#e6e6e6;border:1px solid #c6c6c6"></div>
<div class="t" style="left:1747px;top:913px;font-size:15.5px;color:#8c8c8c">Close</div>
<!-- taskbar -->
<div class="a" style="left:0;top:1030px;width:1920px;height:50px;background:linear-gradient(90deg,#eaeaea 0%,#e9eaeb 60%,#dfe7f2 100%)"></div>
<div class="a" style="left:60px;top:1030px;width:430px;height:50px;background:#fff;border:1px solid #d6d6d6;border-bottom:none"></div>
<!-- taskbar contents -->
<svg style="left:20px;top:1045px" width="21" height="21"><g fill="#111"><path d="M0 2.8L8.6 1.6V9.9H0Z"/><path d="M9.6 1.5L21 0V9.9H9.6Z"/><path d="M0 10.9H8.6V19.3L0 18.1Z"/><path d="M9.6 10.9H21V21L9.6 19.4Z"/></g></svg>
<svg style="left:75px;top:1045px" width="21" height="21"><circle cx="13" cy="8" r="6.5" fill="none" stroke="#222" stroke-width="1.6"/><path d="M8.5 12.5L1 20" stroke="#222" stroke-width="1.8"/></svg>
<div class="t tb" style="left:110px;top:1046px;font-size:18.5px;color:#333">Type here to search</div>
<svg style="left:509px;top:1044px" width="22" height="22"><circle cx="11" cy="11" r="8.5" fill="none" stroke="#111" stroke-width="2.6"/></svg>
<svg style="left:568px;top:1045px" width="24" height="21"><g fill="none" stroke="#111" stroke-width="1.5"><path d="M1 1V20M17 1V20M1 4H17M1 17H17M1 9.5H17M1 11.5H17"/></g><rect x="19.5" y="7" width="3" height="3" fill="#111"/><path d="M21 1V5M21 12V20" stroke="#111" stroke-width="1.3"/></svg>
<svg style="left:629px;top:1042px" width="30" height="25"><path d="M1 3Q1 1 3 1H11L13 4H27Q29 4 29 6V22Q29 24 27 24H3Q1 24 1 22Z" fill="#f5c242"/><path d="M1 7H29V22Q29 24 27 24H3Q1 24 1 22Z" fill="#fbd46b"/><path d="M8 24V15H22V24H18V19H12V24Z" fill="#2f8ed8"/></svg>
<svg style="left:690px;top:1041px" width="31" height="30"><path d="M10 7V4Q10 1 15.5 1Q21 1 21 4V7" fill="none" stroke="#28a8e8" stroke-width="2.2"/><rect x="1" y="6" width="29" height="23" rx="3" fill="#1f4f91"/><rect x="10" y="11" width="5" height="5" fill="#f25022"/><rect x="16" y="11" width="5" height="5" fill="#7fba00"/><rect x="10" y="17" width="5" height="5" fill="#00a4ef"/><rect x="16" y="17" width="5" height="5" fill="#ffb900"/></svg>
<svg style="left:753px;top:1041px" width="29" height="29"><circle cx="14.5" cy="14.5" r="14" fill="#db4437"/><path d="M14.5 14.5L2.4 7.5A14 14 0 0 0 14.5 28.5Z" fill="#0f9d58"/><path d="M14.5 14.5L26.6 7.5A14 14 0 0 1 14.5 28.5Z" fill="#ffcd40"/><circle cx="14.5" cy="14.5" r="6.5" fill="#fff"/><circle cx="14.5" cy="14.5" r="5" fill="#4285f4"/></svg>
<div class="a" style="left:743px;top:1077px;width:51px;height:3px;background:#1d6fd0"></div>
<svg style="left:818px;top:1041px" width="23" height="26"><path d="M0 6L22 0L9 26L10 12Z" fill="#2b4aa0"/><path d="M10 12L22 0L12 9Z" fill="#6a8be0"/></svg>
<div class="a" style="left:862px;top:1030px;width:61px;height:50px;background:#f4f4f4"></div>
<div class="a" style="left:877px;top:1042px;width:29px;height:26px;background:linear-gradient(135deg,#fbe0c0,#f7cfa0)"></div>
<div class="t" style="left:884px;top:1043px;font-size:24px;font-weight:700;color:#e08a2a">F</div>
<div class="a" style="left:862px;top:1077px;width:61px;height:3px;background:#1d6fd0"></div>
<svg style="left:1440px;top:1044px" width="24" height="20"><path d="M5 19Q0 19 0 14Q0 9 5 9Q7 3 13 3Q20 3 21 10Q24 11 24 15Q24 19 20 19Z" fill="#bfe3f7" stroke="#8dcbef" stroke-width="1"/></svg>
<div class="t tb" style="left:1475px;top:1047px;font-size:17.5px;color:#262626">52°F</div><div class="t tb" style="left:1520px;top:1047px;font-size:17.5px;color:#262626">Cloudy</div>
<svg style="left:1597px;top:1049px" width="17" height="11"><path d="M1 10L8.5 2L16 10" fill="none" stroke="#222" stroke-width="1.5"/></svg>
<svg style="left:1628px;top:1045px" width="16" height="20"><path d="M2 5A8 8 0 0 1 14 5M2 15A8 8 0 0 0 14 15" fill="none" stroke="#333" stroke-width="1.2"/><rect x="1" y="6" width="9" height="8" fill="none" stroke="#222" stroke-width="1.4"/><path d="M10 8L14 6V14L10 12" fill="none" stroke="#222" stroke-width="1.3"/></svg>
<svg style="left:1655px;top:1047px" width="22" height="15"><path d="M4.5 13.5Q1 13.5 1 10Q1 6.5 4.5 6.5Q5.5 1.5 11 1.5Q16.5 1.5 17.5 6.5Q21 7 21 10Q21 13.5 17.5 13.5Z" fill="#f2f4f7" stroke="#333" stroke-width="1.4"/></svg>
<svg style="left:1684px;top:1048px" width="22" height="14"><path d="M2 0V4M0 2H4" stroke="#222" stroke-width="1.2"/><rect x="1" y="4" width="18" height="9" fill="#111" stroke="#111"/><rect x="19" y="6.5" width="2" height="4" fill="#111"/></svg>
<svg style="left:1717px;top:1046px" width="17" height="17"><g fill="none" stroke="#222" stroke-width="1.4"><path d="M1 16A15 15 0 0 1 16 1"/><path d="M4.5 16A11.5 11.5 0 0 1 16 4.5"/><path d="M8 16A8 8 0 0 1 16 8"/></g><circle cx="14" cy="14" r="2" fill="#222"/></svg>
<svg style="left:1745px;top:1045px" width="21" height="20"><path d="M1 7H5L10 2V18L5 13H1Z" fill="none" stroke="#222" stroke-width="1.4" stroke-linejoin="round"/><path d="M13 7Q15 10 13 13M16 4Q20 10 16 16" fill="none" stroke="#222" stroke-width="1.3"/><path d="M19 2Q24 10 19 18" fill="none" stroke="#999" stroke-width="1"/></svg>
<div class="t tb" style="left:1785px;top:1036px;font-size:15px;color:#1e1e1e">9:31 AM</div>
<div class="t tb" style="left:1778px;top:1059px;font-size:15px;color:#1e1e1e">3/23/2022</div>
<svg style="left:1868px;top:1045px" width="30" height="30"><path d="M1 1H20V14H7L3 18V14H1Z" fill="#111"/><path d="M4 4.5H17M4 7.5H17M4 10.5H14" stroke="#e5e9ee" stroke-width="1.1"/><circle cx="20" cy="20" r="9" fill="#e5e9ee" stroke="#777" stroke-width="1.2"/><text x="20" y="25" text-anchor="middle" font-family="Liberation Sans" font-size="13" fill="#111">2</text></svg>
<div class="a" style="left:1914px;top:1032px;width:1px;height:46px;background:#c9ced6"></div>
</body></html>
